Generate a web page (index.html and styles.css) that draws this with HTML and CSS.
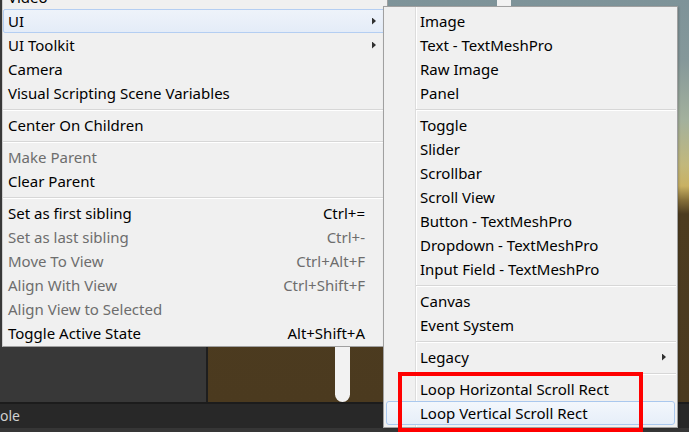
FILE: index.html
```html
<!DOCTYPE html>
<html lang="en">
<head>
<meta charset="utf-8">
<title>Unity context menu</title>
<link rel="stylesheet" href="styles.css">
</head>
<body>
<div class="screen">
  <div class="workspace">
    <div class="hierarchy"></div>
    <div class="split"></div>
    <div class="scene">
      <div class="pill pill-top"></div>
      <div class="pill pill-bottom"></div>
    </div>
  </div>
  <div class="statusline"></div>
  <div class="console-bar"><span>ole</span></div>
  <div class="footer"></div>

  <div class="menu main-menu">
    <div class="item"><span class="label">Video</span></div>
    <div class="item has-sub hot"><span class="label">UI</span></div>
    <div class="item has-sub"><span class="label">UI Toolkit</span></div>
    <div class="item"><span class="label">Camera</span></div>
    <div class="item"><span class="label">Visual Scripting Scene Variables</span></div>
    <div class="sep"></div>
    <div class="item"><span class="label">Center On Children</span></div>
    <div class="sep"></div>
    <div class="item off"><span class="label">Make Parent</span></div>
    <div class="item"><span class="label">Clear Parent</span></div>
    <div class="sep"></div>
    <div class="item"><span class="label">Set as first sibling</span><span class="key">Ctrl+=</span></div>
    <div class="item off"><span class="label">Set as last sibling</span><span class="key">Ctrl+-</span></div>
    <div class="item off"><span class="label">Move To View</span><span class="key">Ctrl+Alt+F</span></div>
    <div class="item off"><span class="label">Align With View</span><span class="key">Ctrl+Shift+F</span></div>
    <div class="item off"><span class="label">Align View to Selected</span></div>
    <div class="item"><span class="label">Toggle Active State</span><span class="key">Alt+Shift+A</span></div>
  </div>

  <div class="menu sub-menu">
    <div class="item"><span class="label">Image</span></div>
    <div class="item"><span class="label">Text - TextMeshPro</span></div>
    <div class="item"><span class="label">Raw Image</span></div>
    <div class="item"><span class="label">Panel</span></div>
    <div class="sep"></div>
    <div class="item"><span class="label">Toggle</span></div>
    <div class="item"><span class="label">Slider</span></div>
    <div class="item"><span class="label">Scrollbar</span></div>
    <div class="item"><span class="label">Scroll View</span></div>
    <div class="item"><span class="label">Button - TextMeshPro</span></div>
    <div class="item"><span class="label">Dropdown - TextMeshPro</span></div>
    <div class="item"><span class="label">Input Field - TextMeshPro</span></div>
    <div class="sep"></div>
    <div class="item"><span class="label">Canvas</span></div>
    <div class="item"><span class="label">Event System</span></div>
    <div class="sep"></div>
    <div class="item has-sub"><span class="label">Legacy</span></div>
    <div class="sep"></div>
    <div class="item"><span class="label">Loop Horizontal Scroll Rect</span></div>
    <div class="item hot"><span class="label">Loop Vertical Scroll Rect</span></div>
  </div>

  <div class="callout"></div>
</div>
</body>
</html>
```
FILE: styles.css
```css
* {
  box-sizing: border-box;
  margin: 0;
  padding: 0;
}

body {
  margin: 0;
  width: 689px;
  height: 432px;
  overflow: hidden;
  font-family: "Noto Sans", "Noto Sans CJK SC", sans-serif;
}

.screen {
  position: relative;
  width: 689px;
  height: 432px;
  overflow: hidden;
  display: flex;
  flex-direction: column;
  background: #343434;
}

.workspace {
  display: flex;
  height: 402px;
}

.hierarchy {
  width: 206px;
  background: #383838;
}

.split {
  width: 2px;
  background: #1e1e1e;
}

.scene {
  flex: 1;
  position: relative;
  background: linear-gradient(to bottom,
    #7e9399 0px,
    #85989a 60px,
    #a3b19d 120px,
    #c2b87c 165px,
    #c9b163 186px,
    #86703a 200px,
    #4d3c20 214px,
    #4b3a1f 100%);
}

.pill {
  position: absolute;
  background: #f2f2f2;
}

.pill-top {
  left: 289px;
  top: 0;
  width: 14px;
  height: 6px;
}

.pill-bottom {
  left: 127px;
  top: 300px;
  width: 15px;
  height: 102px;
  border-radius: 0 0 8px 8px;
}

.statusline {
  height: 2px;
  background: #1c1c1c;
}

.console-bar {
  height: 24px;
  background: #282828;
  color: #d0d0d0;
  font-size: 14px;
  line-height: 24px;
}

.footer {
  flex: 1;
  background: #363636;
}

/* menus */
.menu {
  position: absolute;
  background: #f0f0f0;
  color: #000;
  font-size: 15px;
}

.main-menu {
  left: 2px;
  top: -18px;
  width: 386px;
  border: 1px solid #a0a0a0;
  border-left-color: #cfcfcf;
  padding: 2px 0 1px;
}

.sub-menu {
  left: 383px;
  top: 6px;
  width: 295px;
  border: 1px solid #a0a0a0;
  padding: 2px 0;
  background-color: #f0f0f0;
  background-image: linear-gradient(to right,
    transparent 31px,
    #dcdcdc 31px, #dcdcdc 32px,
    #ffffff 32px, #ffffff 33px,
    transparent 33px);
  box-shadow: 1px 1px 2px rgba(0, 0, 0, 0.2);
}

.item {
  display: flex;
  align-items: center;
  height: 24px;
  white-space: nowrap;
  border: 1px solid transparent;
}

.main-menu .item {
  padding-left: 4px;
  margin: 0 1px 0 0;
}

.sub-menu .item {
  padding-left: 33px;
  margin: 0 2px;
}

.label {
  flex: 1;
}

.key {
  flex: none;
}

.item::after {
  content: "";
  flex: none;
  width: 4px;
  height: 7px;
  margin: 0 9px 0 7px;
}

.sub-menu .item::after {
  margin-right: 8px;
}

.has-sub::after {
  background: #303030;
  clip-path: polygon(0 0, 100% 50%, 0 100%);
}

.off {
  color: #6d6d6d;
}

.main-menu .hot {
  background: linear-gradient(to bottom, #eef3fa, #e4ecf8);
  border-color: #b4cef2;
  border-radius: 2px;
}

.sub-menu .hot {
  background: linear-gradient(to bottom, #f3f7fc, #e6eef9);
  border-color: #aac8ee;
  border-radius: 3px;
}

.sep {
  height: 8px;
  background: linear-gradient(to bottom,
    transparent 4px,
    #d7d7d7 4px, #d7d7d7 5px,
    #ffffff 5px, #ffffff 6px,
    transparent 6px);
}

.sub-menu .sep {
  margin-left: 32px;
  margin-right: 1px;
}

/* red annotation box */
.callout {
  position: absolute;
  left: 398px;
  top: 372px;
  width: 245px;
  height: 60px;
  border: 4px solid #ff0000;
}
```
